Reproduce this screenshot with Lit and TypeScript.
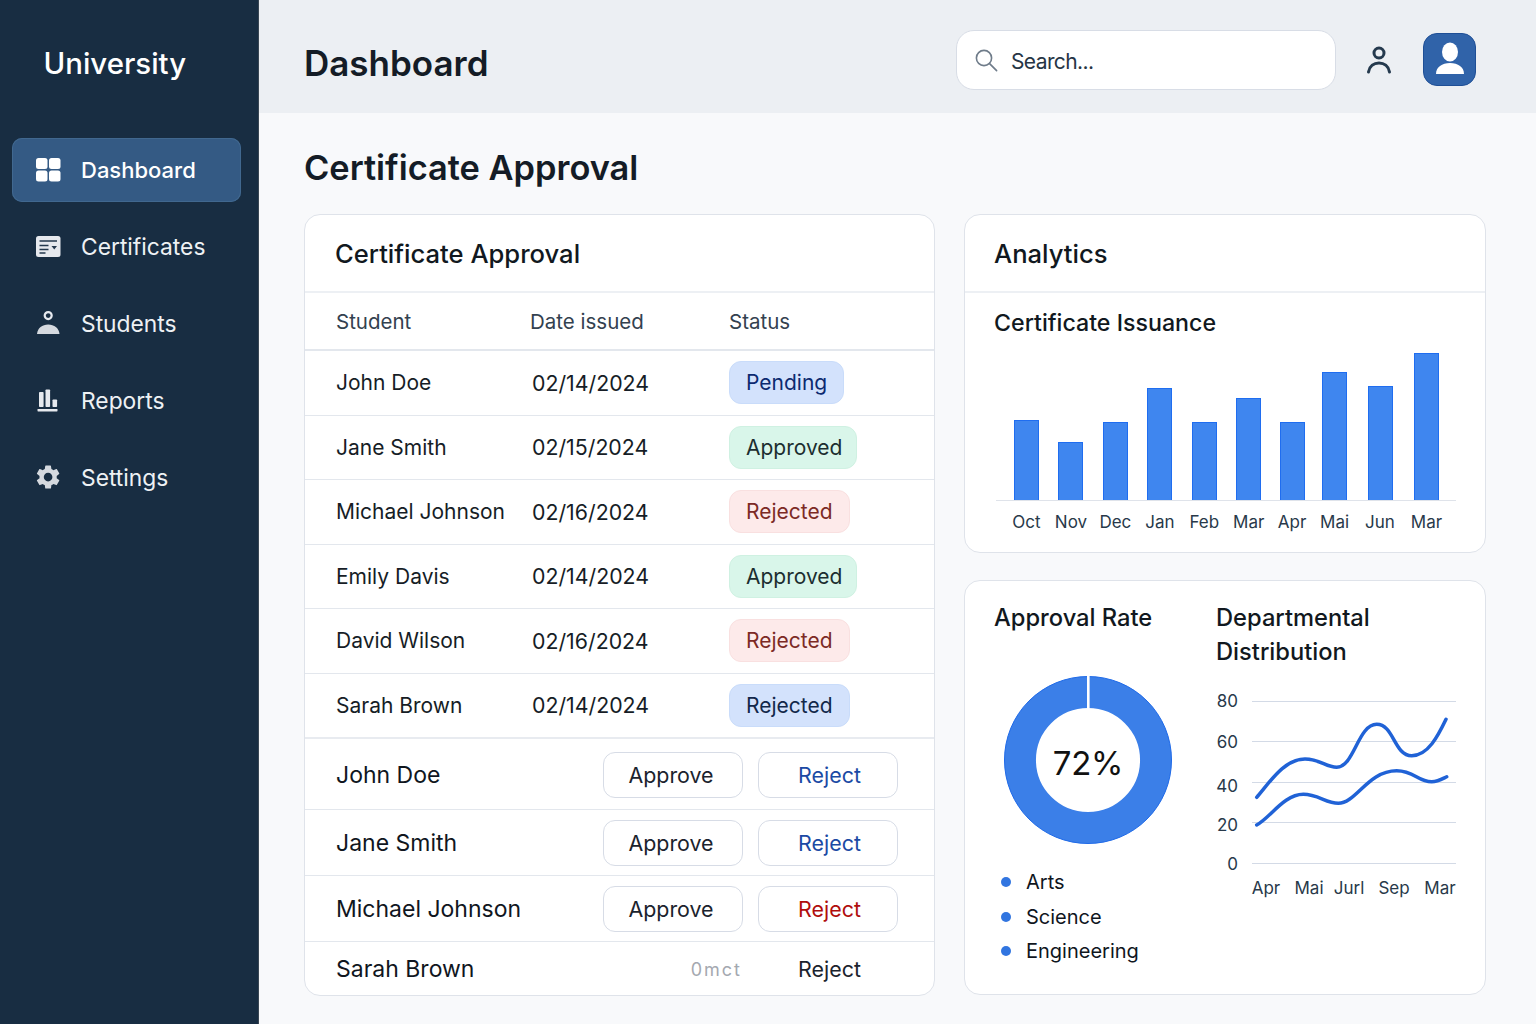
import { LitElement, css, html, svg } from "lit";
import { customElement } from "lit/decorators.js";

const icons = {
  dashboard: svg`<rect x="0" y="0" width="11.5" height="11" rx="2.5"/><rect x="13" y="0" width="11.5" height="11" rx="2.5"/><rect x="0" y="12.5" width="11.5" height="11" rx="2.5"/><rect x="13" y="12.5" width="11.5" height="11" rx="2.5"/>`,
  certificates: svg`<rect x="0" y="1" width="24.5" height="21" rx="2.5" fill="#e6e9ee"/><path d="M3.500 6h17.500M3.500 10.500h9M3.500 14.500h9M3.500 18h6" stroke="#24384d" stroke-width="1.6" fill="none"/><path d="M15.500 11h5.500l-2.750 3.400z" fill="#24384d"/>`,
  students: svg`<circle cx="12.2" cy="4.600" r="3.500" fill="none" stroke="#e6e9ee" stroke-width="2.2"/><path d="M1 23c.6-6 5.200-9.500 11.200-9.500S22.800 17 23.500 23z" fill="#d5d9df"/>`,
  reports: svg`<rect x="3" y="3" width="4.600" height="15" rx=".8"/><rect x="9.500" y="0.500" width="4.600" height="17.500" rx=".8"/><rect x="16.500" y="10.500" width="4.600" height="7.500" rx=".8"/><rect x="1.500" y="20" width="20" height="2.400" rx=".6"/>`,
  settings: svg`<g transform="translate(-2.300 -2.300) scale(1.2)"><path d="M19.14 12.94c.04-.3.06-.61.06-.94 0-.32-.02-.64-.07-.94l2.03-1.58c.18-.14.23-.41.12-.61l-1.92-3.32c-.12-.22-.37-.29-.59-.22l-2.39.96c-.5-.38-1.03-.7-1.62-.94l-.36-2.54c-.04-.24-.24-.41-.48-.41h-3.84c-.24 0-.43.17-.47.41l-.36 2.54c-.59.24-1.13.57-1.62.94l-2.39-.96c-.22-.08-.47 0-.59.22L2.74 8.87c-.12.21-.08.47.12.61l2.03 1.58c-.05.3-.09.63-.09.94s.02.64.07.94l-2.03 1.58c-.18.14-.23.41-.12.61l1.92 3.32c.12.22.37.29.59.22l2.39-.96c.5.38 1.03.7 1.62.94l.36 2.54c.05.24.24.41.48.41h3.84c.24 0 .44-.17.47-.41l.36-2.54c.59-.24 1.13-.56 1.62-.94l2.39.96c.22.08.47 0 .59-.22l1.92-3.32c.12-.22.07-.47-.12-.61l-2.01-1.58zM12 15.6c-1.98 0-3.6-1.62-3.6-3.6s1.62-3.6 3.6-3.6 3.6 1.62 3.6 3.6-1.62 3.6-3.6 3.6z" fill="#d5d9df"/></g>`,
};

const navItems = [
  { label: "Dashboard", icon: icons.dashboard, active: true },
  { label: "Certificates", icon: icons.certificates },
  { label: "Students", icon: icons.students },
  { label: "Reports", icon: icons.reports },
  { label: "Settings", icon: icons.settings },
];

const rows = [
  { name: "John Doe", date: "02/14/2024", status: "Pending", tone: "pending" },
  { name: "Jane Smith", date: "02/15/2024", status: "Approved", tone: "approved" },
  { name: "Michael Johnson", date: "02/16/2024", status: "Rejected", tone: "rejected" },
  { name: "Emily Davis", date: "02/14/2024", status: "Approved", tone: "approved" },
  { name: "David Wilson", date: "02/16/2024", status: "Rejected", tone: "rejected" },
  { name: "Sarah Brown", date: "02/14/2024", status: "Rejected", tone: "rejected-blue" },
];

const actions = [
  { name: "John Doe", tone: "blue" },
  { name: "Jane Smith", tone: "blue" },
  { name: "Michael Johnson", tone: "red" },
];

// dx: the reference's bars are not quite evenly spaced
const bars = [
  { label: "Oct", value: 80, dx: 0 },
  { label: "Nov", value: 58, dx: 0 },
  { label: "Dec", value: 78, dx: 0 },
  { label: "Jan", value: 112, dx: 0 },
  { label: "Feb", value: 78, dx: 0 },
  { label: "Mar", value: 102, dx: 0 },
  { label: "Apr", value: 78, dx: -1 },
  { label: "Mai", value: 128, dx: -3 },
  { label: "Jun", value: 114, dx: -2 },
  { label: "Mar", value: 147, dx: 0 },
];

@customElement("app-root")
export class AppRoot extends LitElement {
  static styles = css`
    :host {
      display: grid;
      grid-template-columns: 259px 1fr;
      width: 1536px;
      height: 1024px;
      overflow: hidden;
      font-family: Inter, "Noto Sans", sans-serif;
      color: #141c26;
      background: #f8f9fb;
    }

    .sidebar {
      background: #182d42;
      padding: 0 17px 0 12px;
      border-right: 1px solid #3a4754;
    }

    .brand {
      height: 138px;
      padding: 46px 0 0 31.5px;
      box-sizing: border-box;
      margin: 0;
      font-size: 29.4px;
      line-height: 36px;
      font-weight: 500;
      color: #fff;
    }

    .nav {
      display: flex;
      flex-direction: column;
      gap: 12.5px;
    }

    .nav-item {
      display: flex;
      align-items: center;
      gap: 20px;
      height: 64px;
      padding-left: 24px;
      border-radius: 10px;
      font-size: 22.8px;
      color: #eef1f4;
    }

    .nav-item:nth-child(4) {
      margin-top: 1px;
    }

    .nav-item.active {
      background: #345a84;
      box-shadow: inset 0 0 0 1px #41688f;
      font-size: 22px;
      font-weight: 500;
      color: #fff;
    }

    .nav-item svg {
      width: 25px;
      height: 24px;
      fill: #e6e9ee;
      flex: none;
    }

    .nav-item.active svg {
      fill: #fff;
    }

    .main {
      min-width: 0;
    }

    .topbar {
      display: flex;
      align-items: center;
      height: 113px;
      padding: 7px 60px 0 45px;
      box-sizing: border-box;
      background: #eceff3;
    }

    .topbar h1 {
      flex: 1;
      margin: 6px 0 0;
      font-size: 35px;
      font-weight: 600;
      color: #141c26;
    }

    .search {
      display: flex;
      align-items: center;
      gap: 13px;
      width: 380px;
      height: 60px;
      padding-left: 17px;
      box-sizing: border-box;
      background: #fff;
      border: 1px solid #d8dde6;
      border-radius: 18px;
      font-size: 21px;
      letter-spacing: -0.6px;
      color: #263545;
    }

    .search span {
      margin-top: 3px;
    }

    .user {
      margin: 0 30px 0 29px;
      display: block;
    }

    .avatar {
      display: flex;
      align-items: center;
      justify-content: center;
      width: 53px;
      height: 53px;
      margin-top: -2px;
      box-sizing: border-box;
      background: #3063a9;
      border: 1px solid #1f4f96;
      border-radius: 14px;
    }

    .content {
      padding: 0 50px 0 45px;
    }

    .content > h2 {
      height: 101px;
      margin: 0;
      padding-top: 32px;
      box-sizing: border-box;
      font-size: 34.4px;
      line-height: 46px;
      font-weight: 600;
      color: #141c26;
    }

    .columns {
      display: grid;
      grid-template-columns: 631px 522px;
      gap: 29px;
    }

    .stack {
      display: flex;
      flex-direction: column;
      gap: 27px;
    }

    .card {
      background: #fff;
      border: 1px solid #dfe3ea;
      border-radius: 16px;
      box-sizing: border-box;
      overflow: hidden;
    }

    .table-card {
      height: 782px;
    }

    .card-title {
      display: flex;
      align-items: center;
      height: 78px;
      margin: 0;
      padding: 1px 0 0 30px;
      box-sizing: border-box;
      border-bottom: 2px solid #edf0f4;
      font-size: 25.6px;
      font-weight: 500;
      color: #111820;
    }

    .analytics .card-title {
      padding-left: 29px;
    }

    .row {
      display: grid;
      grid-template-columns: 196px 197px 1fr;
      align-items: center;
      height: 64.5px;
      box-sizing: border-box;
      padding-left: 31px;
      border-bottom: 1px solid #e3e7ed;
      font-size: 21px;
      color: #161d26;
    }

    .row .date {
      font-size: 21.3px;
    }

    .row.head {
      height: 58px;
      border-bottom-width: 2px;
      color: #33414f;
      font-size: 20.5px;
    }

    .row.head span:nth-child(2) {
      margin-left: -2px;
    }

    .row.last {
      height: 65.5px;
      border-bottom: 2px solid #e8ebf0;
    }

    .badge {
      display: inline-flex;
      align-items: center;
      justify-self: start;
      height: 43px;
      padding: 0 16px;
      border-radius: 12px;
      border: 1px solid transparent;
      box-sizing: border-box;
    }

    .badge.pending {
      background: #d3e2fc;
      color: #0c2a70;
      border-color: #c9dcfa;
    }
    .badge.approved {
      padding-right: 14px;
      background: #d9f6ea;
      color: #1c2e30;
      border-color: #cff1e2;
    }
    .badge.rejected {
      background: #fdeaea;
      color: #7c2a25;
      border-color: #f9e0e0;
    }
    .badge.rejected-blue {
      background: #d3e2fc;
      color: #12284a;
      border-color: #c9dcfa;
    }

    .action-row {
      display: flex;
      align-items: center;
      height: 66px;
      box-sizing: border-box;
      padding: 0 36px 0 31px;
      border-bottom: 1px solid #e3e7ed;
      font-size: 23px;
      color: #10161e;
    }

    .action-row.first {
      height: 71px;
      padding-top: 2px;
    }

    .action-row.final {
      height: 53px;
      padding-top: 1px;
      border-bottom: 0;
    }

    .action-row .who {
      flex: 1;
    }

    .btns {
      display: flex;
      gap: 15px;
    }

    .btn {
      display: flex;
      align-items: center;
      justify-content: center;
      width: 140px;
      height: 46px;
      padding-right: 4px;
      box-sizing: border-box;
      background: #fff;
      border: 1px solid #d7dce6;
      border-radius: 12px;
      font-size: 21.4px;
      color: #1b232d;
    }

    .btn.blue {
      padding: 0 0 0 3px;
      color: #1b4aa4;
    }
    .btn.red {
      padding: 0 0 0 3px;
      color: #b00d0d;
    }
    .btn.plain {
      padding: 0 0 0 3px;
      border-color: transparent;
    }
    .btn.ghost {
      padding: 0;
      border-color: transparent;
      justify-content: flex-end;
      font-size: 18px;
      letter-spacing: 2px;
      color: #a4a8b0;
    }

    .analytics {
      height: 339px;
    }

    .analytics .sub {
      margin: 0;
      padding: 14px 0 0 29px;
      font-size: 23.2px;
      line-height: 32px;
      font-weight: 500;
      color: #111820;
    }

    .bars {
      display: flex;
      justify-content: space-between;
      align-items: flex-end;
      height: 146px;
      margin: 15px 29px 0 31px;
      padding: 0 17px 0 18px;
      border-bottom: 1px solid #dfe3ea;
    }

    .bar {
      width: 25px;
      box-sizing: border-box;
      background: #3f86ef;
      border: 1px solid #1f6df0;
      border-bottom: 0;
    }

    .bar-labels {
      display: flex;
      justify-content: space-between;
      margin: 10px 29px 0 31px;
      padding: 0 17px 0 18px;
    }

    .bar-labels span {
      display: flex;
      justify-content: center;
      width: 25px;
      font-size: 17px;
      line-height: 22px;
      white-space: nowrap;
      color: #28394a;
    }

    .split {
      display: grid;
      grid-template-columns: 222px 1fr;
      height: 415px;
      padding: 20px 0 0 29px;
      box-sizing: border-box;
    }

    .split h3 {
      margin: 0;
      font-size: 23.7px;
      line-height: 34px;
      font-weight: 500;
      color: #111820;
    }

    .donut {
      position: relative;
      display: block;
      width: 170px;
      height: 170px;
      margin: 40px 0 0 9px;
    }

    .donut svg {
      display: block;
    }

    .donut span {
      position: absolute;
      inset: 0;
      display: flex;
      align-items: center;
      justify-content: center;
      padding-top: 6px;
      box-sizing: border-box;
      font-size: 33px;
      letter-spacing: -0.3px;
      color: #111;
    }

    .legend {
      display: flex;
      flex-direction: column;
      gap: 6.5px;
      margin: 23px 0 0 7px;
      font-size: 20px;
      line-height: 28px;
      color: #10161e;
    }

    .legend div {
      display: flex;
      align-items: center;
      gap: 15px;
    }

    .legend i {
      width: 10px;
      height: 10px;
      border-radius: 50%;
      background: #3175e0;
    }

    .lines {
      display: block;
      margin: 21px 0 0 -6px;
    }

    .lines text {
      font-family: Inter, "Noto Sans", sans-serif;
      font-size: 17px;
      fill: #28394a;
    }
  `;

  render() {
    return html`
      <aside class="sidebar">
        <h2 class="brand">University</h2>
        <nav class="nav">
          ${navItems.map(
            (item) => html`
              <div class="nav-item ${item.active ? "active" : ""}">
                <svg viewBox="0 0 25 24">${item.icon}</svg>
                <span>${item.label}</span>
              </div>
            `,
          )}
        </nav>
      </aside>
      <div class="main">
        <header class="topbar">
          <h1>Dashboard</h1>
          <div class="search">
            <svg width="24" height="24" viewBox="0 0 24 24" fill="none" stroke="#6f7c8a" stroke-width="1.6">
              <circle cx="10" cy="10" r="7.6" />
              <path d="M15.6 15.6l7 7" stroke-linecap="round" />
            </svg>
            <span>Search...</span>
          </div>
          <svg class="user" width="28" height="30" viewBox="0 0 28 30" fill="none" stroke="#253a4e" stroke-width="3" stroke-linecap="round">
            <circle cx="14" cy="8" r="5" />
            <path d="M3.500 27c1-6 5.500-9 10.500-9s9.500 3 10.500 9" />
          </svg>
          <div class="avatar">
            <svg width="30" height="34" viewBox="0 0 30 34" fill="#fff">
              <ellipse cx="15" cy="10" rx="8" ry="9.500" />
              <path d="M1 32c0-7 6-11 14-11s14 4 14 11z" />
            </svg>
          </div>
        </header>
        <section class="content">
          <h2>Certificate Approval</h2>
          <div class="columns">
            <div class="card table-card">
              <h3 class="card-title">Certificate Approval</h3>
              <div class="row head">
                <span>Student</span><span>Date issued</span><span>Status</span>
              </div>
              ${rows.map(
                (r, i) => html`
                  <div class="row ${i === rows.length - 1 ? "last" : ""}">
                    <span>${r.name}</span>
                    <span class="date">${r.date}</span>
                    <span class="badge ${r.tone}">${r.status}</span>
                  </div>
                `,
              )}
              ${actions.map(
                (a, i) => html`
                  <div class="action-row ${i === 0 ? "first" : ""}">
                    <span class="who">${a.name}</span>
                    <div class="btns">
                      <span class="btn">Approve</span>
                      <span class="btn ${a.tone}">Reject</span>
                    </div>
                  </div>
                `,
              )}
              <div class="action-row final">
                <span class="who">Sarah Brown</span>
                <div class="btns">
                  <span class="btn ghost">0mct</span>
                  <span class="btn plain">Reject</span>
                </div>
              </div>
            </div>
            <div class="stack">
              <div class="card analytics">
                <h3 class="card-title">Analytics</h3>
                <h3 class="sub">Certificate Issuance</h3>
                <div class="bars">
                  ${bars.map(
                    (b) => html`<div class="bar" style="height:${b.value}px;transform:translateX(${b.dx}px)"></div>`,
                  )}
                </div>
                <div class="bar-labels">
                  ${bars.map((b) => html`<span style="transform:translateX(${b.dx}px)">${b.label}</span>`)}
                </div>
              </div>
              <div class="card split">
                <div>
                  <h3>Approval Rate</h3>
                  <div class="donut">
                    <svg width="170" height="170" viewBox="0 0 170 170">
                      <circle cx="85" cy="85" r="67.8" fill="none" stroke="#3b7fe8" stroke-width="31.500" />
                      <circle cx="85" cy="85" r="83.500" fill="none" stroke="#1f6ae8" stroke-width="1" />
                      <rect x="84" y="0" width="2.600" height="34" fill="#fff" />
                    </svg>
                    <span>72%</span>
                  </div>
                  <div class="legend">
                    <div><i></i>Arts</div>
                    <div><i></i>Science</div>
                    <div><i></i>Engineering</div>
                  </div>
                </div>
                <div>
                  <h3>Departmental<br />Distribution</h3>
                  <svg class="lines" width="250" height="210" viewBox="0 0 250 210">
                    <g stroke="#d3dae6" stroke-width="1">
                      <path d="M42 11.500h204M42 51.500h204M42 92.500h204M42 132.500h204M42 173.500h204" />
                    </g>
                    <g text-anchor="end">
                      <text x="28" y="17">80</text>
                      <text x="28" y="58">60</text>
                      <text x="28" y="102">40</text>
                      <text x="28" y="141">20</text>
                      <text x="28" y="180">0</text>
                    </g>
                    <g text-anchor="middle">
                      <text x="56" y="204">Apr</text>
                      <text x="99" y="204">Mai</text>
                      <text x="139" y="204">Jurl</text>
                      <text x="184" y="204">Sep</text>
                      <text x="230" y="204">Mar</text>
                    </g>
                    <g fill="none" stroke="#2062d6" stroke-width="3.500" stroke-linecap="round">
                      <path d="M46.700 107.300C60 92 74 69 95 69C110 69 116 77.300 126.700 77.300C144 77.300 148 34.300 166.700 34.300C184 34.300 184 65.700 201.700 65.700C218 65.700 228 46 236 29.300" />
                      <path d="M46.700 135C60 128 74 104.300 93.300 104.300C108 104.300 116 113.300 128.300 113.300C146 113.300 158 80.700 186.700 80.700C204 80.700 208 91.700 221.700 91.700C228 91.700 232 89 236.700 86.700" />
                    </g>
                  </svg>
                </div>
              </div>
            </div>
          </div>
        </section>
      </div>
    `;
  }
}
